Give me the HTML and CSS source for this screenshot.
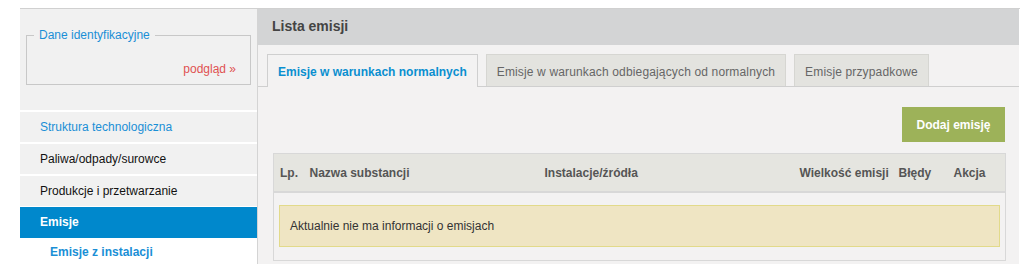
FILE: index.html
```html
<!DOCTYPE html>
<html lang="pl">
<head>
    <meta charset="UTF-8">
    <title>Lista emisji</title>
    <link rel="stylesheet" href="styles.css">
</head>
<body>
    <div class="page">
        <!-- Sidebar -->
        <div class="sidebar">
            <div class="id-box">
                <fieldset class="id-fieldset">
                    <legend>Dane identyfikacyjne</legend>
                    <a class="preview-link" href="#">podgląd &raquo;</a>
                </fieldset>
            </div>
            <ul class="menu">
                <li class="menu-item menu-link">Struktura technologiczna</li>
                <li class="menu-item">Paliwa/odpady/surowce</li>
                <li class="menu-item">Produkcje i przetwarzanie</li>
                <li class="menu-item active">Emisje</li>
                <li class="submenu-item">Emisje z instalacji</li>
            </ul>
        </div>

        <!-- Main panel -->
        <div class="main">
            <div class="main-header">Lista emisji</div>
            <ul class="tabs">
                <li class="tab tab-active">Emisje w warunkach normalnych</li>
                <li class="tab">Emisje w warunkach odbiegających od normalnych</li>
                <li class="tab">Emisje przypadkowe</li>
            </ul>
            <div class="content">
                <div class="actions">
                    <button class="btn btn-add">Dodaj emisję</button>
                </div>
                <table class="emissions">
                    <colgroup>
                        <col class="col-lp">
                        <col class="col-name">
                        <col class="col-inst">
                        <col class="col-size">
                        <col class="col-err">
                        <col class="col-act">
                    </colgroup>
                    <thead>
                        <tr>
                            <th>Lp.</th>
                            <th>Nazwa substancji</th>
                            <th>Instalacje/źródła</th>
                            <th>Wielkość emisji</th>
                            <th>Błędy</th>
                            <th>Akcja</th>
                        </tr>
                    </thead>
                    <tbody>
                        <tr>
                            <td colspan="6" class="empty-cell">
                                <div class="notice">Aktualnie nie ma informacji o emisjach</div>
                            </td>
                        </tr>
                    </tbody>
                </table>
            </div>
        </div>
    </div>
</body>
</html>
```

FILE: styles.css
```css
body {
    margin: 0;
    background-color: #fff;
    font-family: "Liberation Sans", Arial, sans-serif;
    font-size: 12px;
    color: #333;
}

.page {
    display: flex;
    width: 1000px;
    margin-left: 20px;
    margin-top: 8px;
    border-top: 1px solid #d0d0d0;
    height: 256px;
}

/* Sidebar */
.sidebar {
    width: 237px;
    border-right: 1px solid #d4d4d4;
    display: flex;
    flex-direction: column;
}

.id-box {
    background-color: #f1f1f1;
    padding: 19px 6px 0 6px;
    height: 101px;
    flex-shrink: 0;
    box-sizing: border-box;
}

.id-fieldset {
    margin: 0;
    border: 1px solid #c8c8c8;
    padding: 0 14px 0 0;
    height: 57px;
    box-sizing: border-box;
    display: flex;
    justify-content: flex-end;
    align-items: flex-start;
}

.id-fieldset legend {
    color: #1a8fd6;
    margin-left: 7px;
    padding: 0 5px;
    font-size: 12px;
}

.preview-link {
    color: #e05252;
    text-decoration: none;
    font-size: 12px;
    margin-top: 20px;
}

.menu {
    list-style: none;
    margin: 0;
    padding: 0;
}

.menu-item {
    background-color: #f1f1f1;
    border-top: 2px solid #fff;
    height: 30px;
    line-height: 30px;
    padding-left: 20px;
    color: #111;
}

.menu-link {
    color: #1a8fd6;
}

.menu-item.active {
    background-color: #0088cc;
    color: #fff;
    font-weight: bold;
    border-top-width: 1px;
    height: 31px;
    line-height: 31px;
}

.submenu-item {
    padding-left: 30px;
    height: 27px;
    line-height: 28px;
    color: #1a8fd6;
    font-weight: bold;
}

/* Main */
.main {
    width: 761px;
    background-color: #f3f2f2;
    display: flex;
    flex-direction: column;
}

.main-header {
    background-color: #d3d4d5;
    height: 36px;
    line-height: 35px;
    padding-left: 14px;
    font-size: 14px;
    font-weight: bold;
    color: #444;
}

.tabs {
    list-style: none;
    margin: 9px 0 0 0;
    padding: 0 0 0 9px;
    display: flex;
    gap: 8px;
    border-bottom: 1px solid #cfcfcf;
    height: 32px;
}

.tab {
    height: 32px;
    line-height: 34px;
    padding: 0 10px;
    box-sizing: border-box;
    border: 1px solid #d6d6d2;
    border-bottom: none;
    background-color: #e3e3df;
    color: #666;
    letter-spacing: 0.15px;
}

.tab-active {
    height: 33px;
    background-color: #f3f2f2;
    border-color: #cfcfcf;
    color: #0a8fd0;
    font-weight: bold;
    letter-spacing: 0;
}

.content {
    padding: 20px 14px 0 15px;
}

.actions {
    display: flex;
    justify-content: flex-end;
}

.btn {
    border: none;
    cursor: pointer;
    font-family: inherit;
}

.btn-add {
    background-color: #9db259;
    color: #fff;
    font-weight: bold;
    font-size: 12px;
    width: 103px;
    height: 35px;
    padding: 0;
}

.emissions {
    margin-top: 11px;
    width: 732px;
    border-collapse: collapse;
    table-layout: fixed;
    border: 1px solid #d8d8d8;
}

.col-lp { width: 30px; }
.col-name { width: 235px; }
.col-inst { width: 255px; }
.col-size { width: 99px; }
.col-err { width: 55px; }
.col-act { width: 58px; }

.emissions th {
    background-color: #e5e5e0;
    text-align: left;
    font-weight: bold;
    color: #555;
    height: 37px;
    padding: 0 0 0 6px;
    border-bottom: 2px solid #d8d8d8;
    white-space: nowrap;
}

.empty-cell {
    padding: 12px 5px 13px 5px;
}

.notice {
    background-color: #efe5c3;
    border: 1px solid #e2da8a;
    height: 40px;
    line-height: 40px;
    padding-left: 10px;
    color: #333;
}
```
